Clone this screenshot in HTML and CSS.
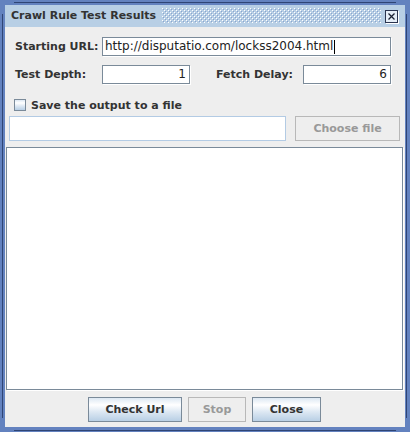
FILE: index.html
```html
<!DOCTYPE html>
<html>
<head>
<meta charset="utf-8">
<link rel="stylesheet" href="styles.css">
</head>
<body>
<div class="frame">
  <div class="titlebar">
    <span class="title">Crawl Rule Test Results</span>
    <div class="bumps">
      <svg width="100%" height="100%" shape-rendering="crispEdges">
        <defs>
          <pattern id="bp" width="4" height="4" patternUnits="userSpaceOnUse">
            <rect x="0" y="0" width="1" height="1" fill="#ffffff"/>
            <rect x="2" y="2" width="1" height="1" fill="#ffffff"/>
            <rect x="1" y="1" width="1" height="1" fill="#8aa5cf"/>
            <rect x="3" y="3" width="1" height="1" fill="#8aa5cf"/>
          </pattern>
        </defs>
        <rect width="100%" height="100%" fill="url(#bp)"/>
      </svg>
    </div>
    <div class="closebtn">
      <svg width="14" height="14" viewBox="0 0 14 14" shape-rendering="crispEdges">
        <rect x="0.5" y="0.5" width="12" height="12" fill="#e6eef7" stroke="#2b3550"/>
        <path d="M13.5 1 V13.5 H1" stroke="#ffffff" fill="none"/>
        <path d="M3.5 3.5 L9.5 9.5 M9.5 3.5 L3.5 9.5" stroke="#1c2233" stroke-width="1.3" shape-rendering="auto"/>
      </svg>
    </div>
  </div>
  <div class="content">
    <div class="row">
      <span class="label">Starting URL:</span>
      <div class="field field-url"><span>http://disputatio.com/lockss2004.html</span><span class="caret"></span></div>
    </div>
    <div class="row row-gap">
      <span class="label">Test Depth:</span>
      <div class="field field-num">1</div>
      <span class="label label-delay">Fetch Delay:</span>
      <div class="field field-num">6</div>
    </div>
    <div class="checkrow">
      <span class="checkbox"></span>
      <span class="checklabel">Save the output to a file</span>
    </div>
    <div class="filerow">
      <div class="filefield"></div>
      <div class="btn btn-disabled btn-choose">Choose file</div>
    </div>
    <div class="output"></div>
    <div class="buttons">
      <div class="btn btn-check">Check Url</div>
      <div class="btn btn-disabled btn-stop">Stop</div>
      <div class="btn btn-close">Close</div>
    </div>
  </div>
</div>
</body>
</html>
```
FILE: styles.css
```css
html, body {
  margin: 0;
  padding: 0;
  background: #6382bf;
}
.frame {
  width: 410px;
  height: 432px;
  box-sizing: border-box;
  padding: 5px;
  display: flex;
  flex-direction: column;
  font-family: "DejaVu Sans", sans-serif;
  color: #333333;
  background-color: #6382bf;
  background-image:
    linear-gradient(#2f4575, #2f4575),
    linear-gradient(#2f4575, #2f4575),
    linear-gradient(#2f4575, #2f4575),
    linear-gradient(#2f4575, #2f4575);
  background-repeat: no-repeat;
  background-size:
    1px calc(100% - 28px),
    1px calc(100% - 28px),
    calc(100% - 28px) 1px,
    calc(100% - 28px) 1px;
  background-position:
    left 2px top 14px,
    right 3px top 14px,
    left 14px top 2px,
    left 14px bottom 1px;
}
.titlebar {
  height: 22px;
  flex: none;
  background: #b8cfe5;
  display: flex;
  align-items: center;
}
.title {
  font-weight: bold;
  font-size: 11px;
  padding-left: 6px;
  white-space: nowrap;
  line-height: 22px;
}
.bumps {
  flex: 1;
  height: 15px;
  margin: 0 4px 1px 6px;
  overflow: hidden;
}
.bumps svg {
  display: block;
}
.closebtn {
  width: 14px;
  height: 14px;
  margin-right: 6px;
  margin-top: 1px;
}
.closebtn svg {
  display: block;
}
.content {
  flex: 1;
  background: #eeeeee;
  display: flex;
  flex-direction: column;
  padding-top: 10px;
  padding-bottom: 5px;
}
.row {
  display: flex;
  align-items: center;
  height: 19px;
  padding-left: 10px;
}
.row-gap {
  margin-top: 9px;
}
.label {
  font-weight: bold;
  font-size: 11px;
  width: 87px;
  white-space: nowrap;
}
.label-delay {
  margin-left: 26px;
}
.field {
  height: 19px;
  box-sizing: border-box;
  background: #ffffff;
  border: 1px solid #7a8a99;
  box-shadow: 1px 1px 0 #ffffff;
  font-size: 12px;
  line-height: 17px;
  color: #222222;
  display: flex;
  align-items: center;
}
.field-url {
  width: 289px;
  padding-left: 2px;
}
.caret {
  display: inline-block;
  width: 1px;
  height: 14px;
  background: #000000;
  margin-left: 1px;
}
.field-num {
  width: 88px;
  justify-content: flex-end;
  padding-right: 3px;
}
.checkrow {
  display: flex;
  align-items: center;
  margin-top: 15px;
  height: 12px;
  padding-left: 9px;
}
.checkbox {
  width: 12px;
  height: 12px;
  box-sizing: border-box;
  border: 1px solid #7a8a99;
  background: linear-gradient(#dde8f3 0%, #ffffff 30%, #dde8f3 60%, #b8cfe5 100%);
}
.checklabel {
  font-weight: bold;
  font-size: 11px;
  margin-left: 5px;
  white-space: nowrap;
}
.filerow {
  display: flex;
  margin-top: 5px;
  height: 25px;
  padding-left: 4px;
}
.filefield {
  width: 277px;
  box-sizing: border-box;
  background: #ffffff;
  border: 1px solid #b3cbe4;
}
.btn {
  box-sizing: border-box;
  height: 25px;
  display: flex;
  align-items: center;
  justify-content: center;
  font-weight: bold;
  font-size: 11px;
  white-space: nowrap;
  border: 1px solid #7a8a99;
  background: linear-gradient(#dde8f3 0%, #ffffff 30%, #dde8f3 60%, #b8cfe5 100%);
  color: #333333;
}
.btn-disabled {
  border-color: #b8b8b8;
  background: #eeeeee;
  color: #999999;
}
.btn-choose {
  width: 105px;
  margin-left: 9px;
}
.output {
  flex: 1;
  margin: 6px 2px 0 1px;
  background: #ffffff;
  border: 1px solid #7a8a99;
  box-shadow: 1px 1px 0 #ffffff;
}
.buttons {
  display: flex;
  justify-content: center;
  gap: 6px;
  margin-top: 7px;
  padding-right: 1px;
}
.btn-check {
  width: 94px;
}
.btn-stop {
  width: 58px;
}
.btn-close {
  width: 69px;
}
```
